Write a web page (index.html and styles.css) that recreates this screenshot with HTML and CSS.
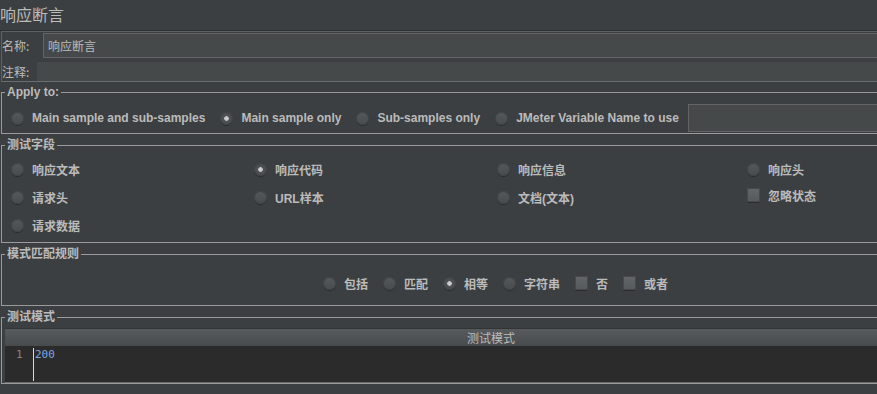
FILE: index.html
```html
<!DOCTYPE html>
<html lang="zh-CN">
<head>
    <meta charset="UTF-8">
    <meta name="viewport" content="width=device-width, initial-scale=1.0">
    <title>响应断言</title>
    <link rel="stylesheet" href="styles.css">
</head>
<body>
    <div class="page">
        <div class="title">响应断言</div>

        <div class="name-panel">
            <div class="field-row name-row">
                <label class="field-label" for="nombre">名称:</label>
                <input class="text-input" id="nombre" type="text" value="响应断言">
            </div>
            <div class="field-row comment-row">
                <label class="field-label" for="comentario">注释:</label>
                <input class="text-input" id="comentario" type="text">
            </div>
        </div>

        <fieldset class="group apply">
            <legend>Apply to:</legend>
            <div class="apply-row">
                <label class="option"><input type="radio" name="scope">Main sample and sub-samples</label>
                <label class="option"><input type="radio" name="scope" checked>Main sample only</label>
                <label class="option"><input type="radio" name="scope">Sub-samples only</label>
                <label class="option"><input type="radio" name="scope">JMeter Variable Name to use</label>
                <input class="var-input" type="text">
            </div>
        </fieldset>

        <fieldset class="group fields">
            <legend>测试字段</legend>
            <div class="field-grid">
                <label class="option"><input type="radio" name="field">响应文本</label>
                <label class="option"><input type="radio" name="field" checked>响应代码</label>
                <label class="option"><input type="radio" name="field">响应信息</label>
                <label class="option"><input type="radio" name="field">响应头</label>
                <label class="option"><input type="radio" name="field">请求头</label>
                <label class="option"><input type="radio" name="field">URL样本</label>
                <label class="option"><input type="radio" name="field">文档(文本)</label>
                <label class="option raised"><input type="checkbox">忽略状态</label>
                <label class="option"><input type="radio" name="field">请求数据</label>
            </div>
        </fieldset>

        <fieldset class="group rules">
            <legend>模式匹配规则</legend>
            <div class="rule-row">
                <label class="option"><input type="radio" name="rule">包括</label>
                <label class="option"><input type="radio" name="rule">匹配</label>
                <label class="option"><input type="radio" name="rule" checked>相等</label>
                <label class="option"><input type="radio" name="rule">字符串</label>
                <label class="option"><input type="checkbox">否</label>
                <label class="option"><input type="checkbox">或者</label>
            </div>
        </fieldset>

        <fieldset class="group patterns">
            <legend>测试模式</legend>
            <div class="pattern-table">
                <div class="table-head">测试模式</div>
                <div class="editor">
                    <div class="gutter">1</div>
                    <div class="code">200</div>
                </div>
            </div>
        </fieldset>
    </div>
</body>
</html>
```

FILE: styles.css
```css
body {
    margin: 0;
    background-color: #3c3f41;
    color: #bbbbbb;
    font-family: "Liberation Sans", "Noto Sans CJK SC", sans-serif;
    font-size: 12px;
    overflow: hidden;
}

.page {
    width: 990px;
}

.title {
    height: 30px;
    line-height: 28px;
    font-size: 16px;
    font-family: "Noto Sans CJK SC", sans-serif;
    border-bottom: 1px solid #2d2f31;
}

/* nombre / comentario */
.name-panel {
    margin-left: 1px;
    padding-top: 1px;
    border-top: 1px solid #5e6163;
    border-left: 1px solid #5e6163;
    border-bottom: 1px solid #6a6d6f;
    display: flex;
    flex-direction: column;
    gap: 4px;
}

.field-row {
    display: flex;
    align-items: center;
}

.name-row {
    height: 25px;
}

.comment-row {
    height: 19px;
}

.field-label {
    flex: none;
    font-family: "Noto Sans CJK SC", sans-serif;
    font-size: 12px;
    white-space: nowrap;
}

.name-row .field-label {
    width: 41px;
}

.comment-row .field-label {
    width: 35px;
}

.text-input {
    flex: 1;
    height: 100%;
    box-sizing: border-box;
    margin: 0;
    padding: 0 4px;
    background-color: #45494a;
    border: 1px solid #646464;
    color: #bbbbbb;
    font-family: "Noto Sans CJK SC", sans-serif;
    font-size: 12px;
    outline: none;
}

.comment-row .text-input {
    border: none;
}

/* grupos */
.group {
    margin: 3px 0 0 1px;
    padding: 0;
    border: 1px solid #9a9a9a;
    min-width: 0;
}

.group legend {
    margin-left: 3px;
    padding: 0 2px;
    font-weight: bold;
    line-height: 16px;
}

.apply {
    margin-top: 2px;
}

.option {
    display: inline-flex;
    align-items: center;
    gap: 8px;
    font-weight: bold;
    white-space: nowrap;
}

.option.raised {
    margin-top: -4px;
}

.option input {
    appearance: none;
    margin: 0;
    width: 13px;
    height: 13px;
    flex: none;
}

.option input[type="radio"] {
    border-radius: 50%;
    background: linear-gradient(#56595b, #484b4d);
    box-shadow: 0 1px 0 #2a2c2d, inset 0 0 0 1px #404345;
}

.option input[type="radio"]:checked {
    background: radial-gradient(circle, #d0d0d0 0, #c4c4c4 2px, #4e5153 2.6px, #46494b 100%);
}

.option input[type="checkbox"] {
    height: 14px;
    border-radius: 2px;
    background: linear-gradient(#636668, #56595b);
    box-shadow: 0 1px 0 #2a2c2d, inset 0 0 0 1px #48494a;
}

.apply-row {
    display: flex;
    align-items: center;
    height: 28px;
    padding: 4px 0 1px 9px;
}

.apply-row .option + .option {
    margin-left: 15px;
}

.var-input {
    flex: 1;
    height: 28px;
    box-sizing: border-box;
    margin: 0 0 0 9px;
    background-color: #45494a;
    border: 1px solid #646464;
    outline: none;
}

.field-grid {
    display: grid;
    grid-template-columns: 243px 243px 250px 1fr;
    grid-auto-rows: 28px;
    align-items: center;
    padding: 2px 0 3px 9px;
}

.rule-row {
    display: flex;
    justify-content: center;
    align-items: center;
    gap: 15px;
    height: 28px;
    padding: 7px 0 8px;
}

/* tabla de patrones */
.pattern-table {
    padding: 3px 0 0 3px;
}

.table-head {
    height: 18px;
    line-height: 18px;
    text-align: center;
    padding-right: 12px;
    background: linear-gradient(#575b5d, #484b4d);
    border-top: 1px solid #323436;
    box-sizing: border-box;
    font-family: "Noto Sans CJK SC", sans-serif;
}

.editor {
    display: flex;
    height: 36px;
    background-color: #2b2b2b;
    border-bottom: 1px solid #6a6d6f;
}

.gutter {
    width: 29px;
    box-sizing: border-box;
    margin: 2px 0 1px;
    padding-left: 11px;
    border-right: 1px solid #d8d8d8;
    color: #8a8484;
    font-family: "DejaVu Sans Mono", monospace;
    font-size: 11px;
    line-height: 14px;
}

.code {
    padding: 2px 0 0 1px;
    color: #7ba8e4;
    font-family: "DejaVu Sans Mono", monospace;
    font-size: 11px;
    line-height: 14px;
}
```
